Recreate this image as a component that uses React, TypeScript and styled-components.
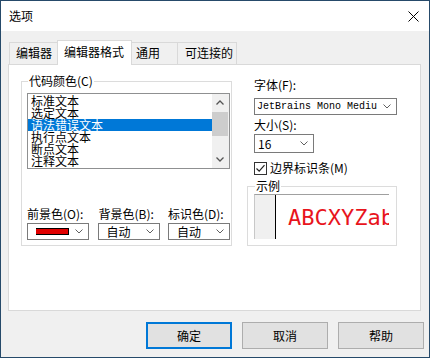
import styled, { createGlobalStyle } from 'styled-components';

const GlobalStyle = createGlobalStyle`
  html, body {
    margin: 0;
    padding: 0;
    background: #ffffff;
  }
  body {
    font-family: "Noto Sans CJK SC", "Noto Sans", sans-serif;
    font-size: 12px;
    color: #000;
  }
  * { box-sizing: border-box; }
`;

const Window = styled.div`
  width: 430px;
  height: 358px;
  border: 1px solid #264a6a;
  display: flex;
  flex-direction: column;
  background: #f0f0f0;
`;

const TitleBar = styled.div`
  height: 30px;
  flex: none;
  background: #ffffff;
  display: flex;
  align-items: center;
  justify-content: space-between;
  padding: 0 10px 0 8px;
  line-height: 14px;
`;

const Body = styled.div`
  flex: 1;
  display: flex;
  flex-direction: column;
  padding: 9px 5px 8px 7px;
`;

const TabRow = styled.div`
  height: 24px;
  display: flex;
  align-items: flex-end;
  padding-left: 1px;
  position: relative;
  z-index: 1;
`;

const Tab = styled.div<{ $active?: boolean; $w: number; $pl: number }>`
  width: ${({ $w }) => $w}px;
  height: ${({ $active }) => ($active ? 25 : 22)}px;
  margin-bottom: ${({ $active }) => ($active ? -1 : 0)}px;
  margin-left: -1px;
  &:first-child { margin-left: 0; }
  padding-left: ${({ $pl }) => $pl}px;
  padding-top: ${({ $active }) => ($active ? 4 : 3)}px;
  border: 1px solid #d9d9d9;
  border-bottom: none;
  background: ${({ $active }) => ($active ? '#ffffff' : '#f0f0f0')};
  line-height: 14px;
  white-space: nowrap;
  position: relative;
  z-index: ${({ $active }) => ($active ? 2 : 1)};
`;

const Panel = styled.div`
  width: 413px;
  height: 247px;
  flex: none;
  border: 1px solid #d9d9d9;
  background: #ffffff;
  display: flex;
  align-items: flex-start;
  gap: 15px;
  padding: 16px 0 0 12px;
`;

const Group = styled.div<{ $w: number; $h: number }>`
  width: ${({ $w }) => $w}px;
  height: ${({ $h }) => $h}px;
  border: 1px solid #dcdcdc;
  display: flex;
  flex-direction: column;
`;

const Caption = styled.span`
  display: block;
  width: fit-content;
  margin: -8px 0 0 1px;
  padding: 0 1px;
  background: #ffffff;
  line-height: 14px;
  white-space: nowrap;
`;

const CodeGroup = styled(Group)`
  padding: 0 1px 5px 5px;
`;

const ListBox = styled.div`
  margin-top: 5px;
  width: 203px;
  height: 76px;
  border: 1px solid #8f9091;
  display: flex;
`;

const Items = styled.div`
  flex: 1;
  padding-top: 1px;
  overflow: hidden;
`;

const Item = styled.div<{ $selected?: boolean }>`
  height: 12px;
  line-height: 12px;
  padding-left: 3px;
  white-space: nowrap;
  background: ${({ $selected }) => ($selected ? '#0078d7' : 'transparent')};
  color: ${({ $selected }) => ($selected ? '#ffffff' : '#000000')};
`;

const ScrollBar = styled.div`
  width: 17px;
  background: #f0f0f0;
  display: flex;
  flex-direction: column;
`;

const ArrowBox = styled.div`
  height: 17px;
  display: flex;
  align-items: center;
  justify-content: center;
  padding-right: 1px;
`;

const Thumb = styled.div`
  margin: 1px 1px 0 0;
  height: 24px;
  background: #cdcdcd;
`;

const Spacer = styled.div`
  flex: 1;
`;

const ColorRow = styled.div`
  margin-top: auto;
  width: 203px;
  display: flex;
  justify-content: space-between;
`;

const Field = styled.div<{ $w: number }>`
  width: ${({ $w }) => $w}px;
  display: flex;
  flex-direction: column;
  gap: 2px;
`;

const Label = styled.div<{ $indent?: number; $top?: number }>`
  line-height: 14px;
  white-space: nowrap;
  padding-left: ${({ $indent }) => $indent ?? 0}px;
  margin-top: ${({ $top }) => $top ?? 0}px;
`;

const Combo = styled.div<{ $w?: number; $h?: number; $pl?: number; $indent?: number; $top?: number }>`
  width: ${({ $w }) => ($w ? `${$w}px` : '100%')};
  height: ${({ $h }) => $h ?? 17}px;
  margin-left: ${({ $indent }) => $indent ?? 0}px;
  margin-top: ${({ $top }) => $top ?? 0}px;
  border: 1px solid #7a7a7a;
  background: #ffffff;
  display: flex;
  align-items: center;
  padding-left: ${({ $pl }) => $pl ?? 8}px;
  padding-right: 5px;
  white-space: nowrap;
`;

const ComboText = styled.span<{ $mono?: boolean }>`
  flex: 1;
  display: flex;
  align-items: center;
  line-height: 15px;
  overflow-x: clip;
  font-family: ${({ $mono }) =>
    $mono ? '"Liberation Mono", "DejaVu Sans Mono", monospace' : 'inherit'};
  font-size: ${({ $mono }) => ($mono ? 10 : 12)}px;
`;

const Swatch = styled.span`
  width: 36px;
  height: 7px;
  border: 1px solid #000000;
  background: #e00000;
  margin-left: -3px;
`;

const RightCol = styled.div`
  width: 150px;
  margin-top: -3px;
  display: flex;
  flex-direction: column;
`;

const CheckRow = styled.div`
  margin-top: 8px;
  padding-left: 7px;
  display: flex;
  align-items: center;
  gap: 3px;
  line-height: 14px;
`;

const CheckBox = styled.span`
  width: 13px;
  height: 13px;
  border: 1px solid #333333;
  background: #ffffff;
  display: flex;
  align-items: center;
  justify-content: center;
`;

const SampleGroup = styled(Group)`
  margin-top: 11px;
  padding: 0 7px 6px 6px;
`;

const Sample = styled.div`
  margin-top: 1px;
  height: 45px;
  border-top: 1px solid #a0a0a0;
  border-left: 1px solid #c8c8c8;
  display: flex;
  overflow: hidden;
`;

const Gutter = styled.div`
  width: 21px;
  flex: none;
  background: #f0f0f0;
  border-right: 1px solid #000000;
`;

const SampleText = styled.div`
  padding-left: 12px;
  display: flex;
  align-items: center;
  font-family: "DejaVu Sans Mono", "Liberation Mono", monospace;
  font-size: 22px;
  color: #e8141c;
  white-space: nowrap;
`;

const ButtonRow = styled.div`
  margin-top: 11px;
  display: flex;
  justify-content: flex-end;
  gap: 10px;
`;

const Button = styled.div<{ $default?: boolean }>`
  width: 86px;
  height: 27px;
  display: flex;
  align-items: center;
  justify-content: center;
  background: #e1e1e1;
  border: ${({ $default }) => ($default ? '2px solid #0078d7' : '1px solid #adadad')};
  line-height: 14px;
`;

function Chevron({ up }: { up?: boolean }) {
  return (
    <svg width="8" height="5" viewBox="0 0 8 5">
      <path
        d={up ? 'M0.5 4.5 L4 1 L7.5 4.5' : 'M0.5 0.5 L4 4 L7.5 0.5'}
        fill="none"
        stroke="#555555"
        strokeWidth="1.3"
      />
    </svg>
  );
}

function DropArrow() {
  return (
    <svg width="8" height="5" viewBox="0 0 8 5">
      <path d="M0.5 0.5 L4 4 L7.5 0.5" fill="none" stroke="#606060" strokeWidth="1" />
    </svg>
  );
}

const items = ['标准文本', '选定文本', '语法错误文本', '执行点文本', '断点文本', '注释文本'];

export default function App() {
  return (
    <>
      <GlobalStyle />
      <Window>
        <TitleBar>
          <span>选项</span>
          <svg width="11" height="11" viewBox="0 0 11 11">
            <path d="M0.5 0.5 L10.5 10.5 M10.5 0.5 L0.5 10.5" stroke="#000" strokeWidth="1" />
          </svg>
        </TitleBar>
        <Body>
          <TabRow>
            <Tab $w={49} $pl={6}>编辑器</Tab>
            <Tab $w={75} $pl={6} $active>编辑器格式</Tab>
            <Tab $w={47} $pl={4}>通用</Tab>
            <Tab $w={60} $pl={7}>可连接的</Tab>
          </TabRow>
          <Panel>
            <CodeGroup $w={211} $h={165}>
              <Caption>代码颜色(C)</Caption>
              <ListBox>
                <Items>
                  {items.map((t) => (
                    <Item key={t} $selected={t === '语法错误文本'}>{t}</Item>
                  ))}
                </Items>
                <ScrollBar>
                  <ArrowBox><Chevron up /></ArrowBox>
                  <Thumb />
                  <Spacer />
                  <ArrowBox><Chevron /></ArrowBox>
                </ScrollBar>
              </ListBox>
              <ColorRow>
                <Field $w={62}>
                  <Label>前景色(O):</Label>
                  <Combo>
                    <ComboText><Swatch /></ComboText>
                    <DropArrow />
                  </Combo>
                </Field>
                <Field $w={62}>
                  <Label $indent={1}>背景色(B):</Label>
                  <Combo>
                    <ComboText>自动</ComboText>
                    <DropArrow />
                  </Combo>
                </Field>
                <Field $w={62}>
                  <Label>标识色(D):</Label>
                  <Combo>
                    <ComboText>自动</ComboText>
                    <DropArrow />
                  </Combo>
                </Field>
              </ColorRow>
            </CodeGroup>
            <RightCol>
              <Label $indent={7}>字体(F):</Label>
              <Combo $w={143} $pl={2} $indent={7} $top={6}>
                <ComboText $mono>JetBrains Mono Mediu</ComboText>
                <DropArrow />
              </Combo>
              <Label $indent={7} $top={3}>大小(S):</Label>
              <Combo $w={60} $h={19} $pl={3} $indent={7} $top={2}>
                <ComboText>16</ComboText>
                <DropArrow />
              </Combo>
              <CheckRow>
                <CheckBox>
                  <svg width="11" height="11" viewBox="0 0 11 11">
                    <path d="M1.5 5.5 L4.2 8.2 L9.5 2.2" fill="none" stroke="#222" strokeWidth="1.2" />
                  </svg>
                </CheckBox>
                <span>边界标识条(M)</span>
              </CheckRow>
              <SampleGroup $w={150} $h={60}>
                <Caption>示例</Caption>
                <Sample>
                  <Gutter />
                  <SampleText>ABCXYZab</SampleText>
                </Sample>
              </SampleGroup>
            </RightCol>
          </Panel>
          <ButtonRow>
            <Button $default>确定</Button>
            <Button>取消</Button>
            <Button>帮助</Button>
          </ButtonRow>
        </Body>
      </Window>
    </>
  );
}
